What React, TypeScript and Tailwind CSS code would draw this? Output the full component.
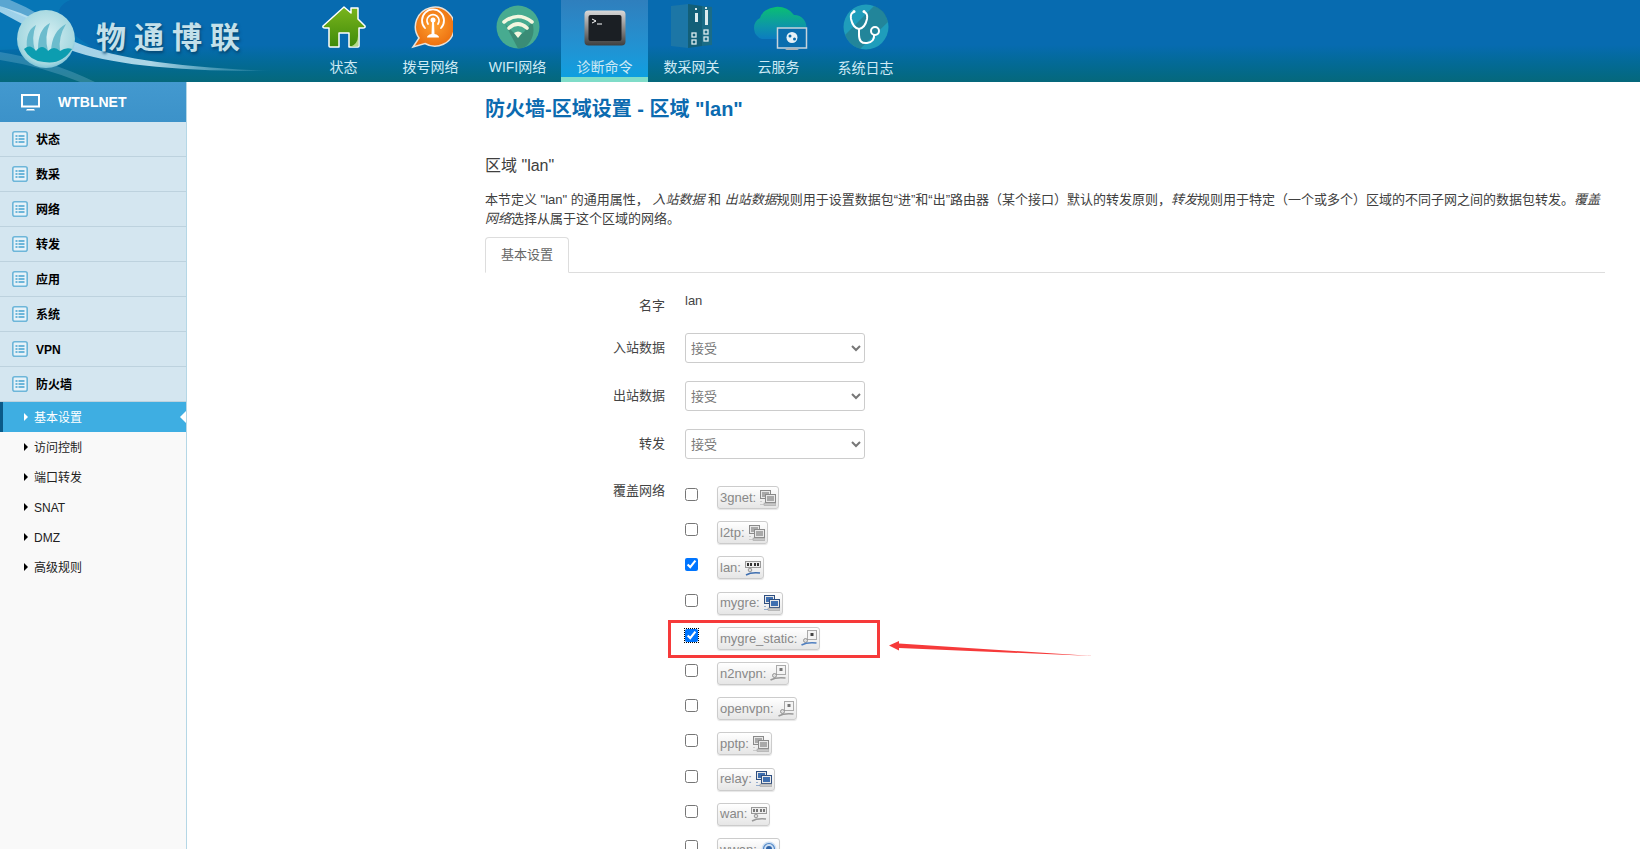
import React from 'react';

const FONT = '"Liberation Sans", "Noto Sans CJK SC", sans-serif';

const HomeIcon = () => (
  <svg width="44" height="42" viewBox="0 0 44 42">
    <defs>
      <linearGradient id="homeFill" x1="0" y1="0" x2="0" y2="1">
        <stop offset="0" stopColor="#7ab51d" />
        <stop offset="1" stopColor="#3f8a0a" />
      </linearGradient>
    </defs>
    <path d="M22 1 L29 7 V2 H36 V13 L43 20 Q43.500 22 41 22 H37 V40 Q37 41 36 41 H27 V27 H17 V41 H8 Q7 41 7 40 V22 H3 Q0.500 22 1 20 Z" fill="url(#homeFill)" stroke="#fff" strokeWidth="1.500" strokeLinejoin="round" />
    <path d="M28 41 Q36 38 36 30 V40 Z" fill="#b6d98a" />
  </svg>
);

const DialIcon = () => (
  <svg width="44" height="44" viewBox="0 0 44 44">
    <defs>
      <radialGradient id="dialFill" cx="0.5" cy="0.45" r="0.6">
        <stop offset="0" stopColor="#ffa02e" />
        <stop offset="1" stopColor="#ea6a0c" />
      </radialGradient>
    </defs>
    <path d="M4 42 L10 33 A19.500 19.500 0 1 1 16 38.500 Z" fill="url(#dialFill)" stroke="#e8e2da" strokeWidth="1.500" />
    <g fill="none" stroke="#fff" strokeWidth="1.800" strokeLinecap="round">
      <path d="M19 19 A6 6 0 1 1 29 19" />
      <path d="M16 23 A11 11 0 1 1 32 23" />
    </g>
    <circle cx="24" cy="15" r="2.500" fill="#fff" />
    <path d="M23 17 H25 L25.500 29 Q30 30 30 32.500 H18 Q18 30 22.500 29 Z" fill="#fff" />
  </svg>
);

const WifiIcon = () => (
  <svg width="44" height="44" viewBox="0 0 44 44">
    <circle cx="22" cy="22" r="21.500" fill="#47ab90" />
    <path d="M9 19 L22 32 L28 27 L36 17 A21.500 21.500 0 0 1 29 42 Q24 44 22 43.500 Z" fill="#37846f" opacity="0.8" />
    <g fill="none" stroke="#f4f6df" strokeWidth="3.600" strokeLinecap="round">
      <path d="M8 17 Q22 6 36 17" />
      <path d="M13 23 Q22 15 31 23" />
    </g>
    <path d="M18 28 Q22 25 26 28 L22 33 Z" fill="#f4f6df" />
  </svg>
);

const TerminalIcon = () => (
  <svg width="42" height="36" viewBox="0 0 42 36">
    <defs>
      <linearGradient id="termFrame" x1="0" y1="0" x2="0" y2="1">
        <stop offset="0" stopColor="#d9d9d9" />
        <stop offset="0.5" stopColor="#8b8b8b" />
        <stop offset="1" stopColor="#3e3e3e" />
      </linearGradient>
    </defs>
    <rect x="0.500" y="0.500" width="41" height="35" rx="4" fill="url(#termFrame)" />
    <rect x="4.500" y="5" width="33" height="26" rx="2" fill="#1b1f24" />
    <path d="M8 9 L12 11 L8 13 M13 14 H18" fill="none" stroke="#fff" strokeWidth="1" />
  </svg>
);

const GatewayIcon = () => (
  <svg width="42" height="44" viewBox="0 0 42 44">
    <path d="M0 2 L17 0 V44 L0 42 Z" fill="#1c76a6" />
    <path d="M17 0 L31 2 V42 L17 44 Z" fill="#125f78" />
    <path d="M31 2 L41 3 V41 L31 42 Z" fill="#1a6c86" />
    <g fill="#dcecef">
      <rect x="24" y="4" width="2" height="2" />
      <rect x="34" y="3" width="2" height="2" />
      <rect x="24" y="9" width="3" height="9" />
      <rect x="34" y="6" width="3" height="15" />
    </g>
    <g fill="none" stroke="#dcecef" strokeWidth="1.300">
      <rect x="21" y="29" width="4" height="4" />
      <rect x="21" y="36" width="4" height="4" />
      <rect x="33" y="26" width="4" height="4" />
      <rect x="33" y="33" width="4" height="4" />
    </g>
  </svg>
);

const CloudIcon = () => (
  <svg width="58" height="46" viewBox="0 0 58 46">
    <defs>
      <linearGradient id="cloudFill" x1="0" y1="0" x2="0" y2="1">
        <stop offset="0" stopColor="#0abf72" />
        <stop offset="0.6" stopColor="#0d96a8" />
        <stop offset="1" stopColor="#0c7cc0" />
      </linearGradient>
    </defs>
    <path d="M12 35 A11.500 11.500 0 0 1 10 14 A18 14 0 0 1 44 11 A12 12 0 0 1 56 26 V28 H28 V35 Z" fill="url(#cloudFill)" />
    <rect x="27.500" y="24" width="29" height="20" fill="#0a6dae" stroke="#c7d3db" strokeWidth="1.500" />
    <path d="M38 44 H46 L49 46 H35 Z" fill="#a9b2b8" />
    <circle cx="42" cy="33.500" r="5.500" fill="#e6f1f7" />
    <circle cx="40" cy="32" r="1.500" fill="#0a6dae" />
    <circle cx="44.500" cy="35" r="1.500" fill="#0a6dae" />
  </svg>
);

const LogIcon = () => (
  <svg width="46" height="46" viewBox="0 0 46 46">
    <circle cx="23" cy="23" r="22.500" fill="#1f9dbb" />
    <path d="M2 31 L31 2 Q42 5 45 18 L17 45 Q6 41 2 31 Z" fill="#237b8c" opacity="0.7" />
    <g fill="none" stroke="#fff" strokeWidth="2">
      <path d="M11 8 Q7 9 8 15 Q10 24 16 25 Q22 24 24 15 Q25 9 21 8" />
      <path d="M16 25 V31 Q16 40 24 39 Q32 38 31 30" />
      <circle cx="32" cy="27" r="4" />
    </g>
    <circle cx="11" cy="7.500" r="1.500" fill="#fff" />
    <circle cx="21" cy="7.500" r="1.500" fill="#fff" />
  </svg>
);

const MenuListIcon = () => (
  <svg width="16" height="16" viewBox="0 0 16 16" className="shrink-0">
    <rect x="0.800" y="0.800" width="14.400" height="14.400" rx="2" fill="#e7f2f8" stroke="#6db6d9" strokeWidth="1.600" />
    <g fill="#6db6d9">
      <rect x="3.500" y="4" width="2" height="2" />
      <rect x="6.500" y="4" width="6" height="2" />
      <rect x="3.500" y="7" width="2" height="2" />
      <rect x="6.500" y="7" width="6" height="2" />
      <rect x="3.500" y="10" width="2" height="2" />
      <rect x="6.500" y="10" width="6" height="2" />
    </g>
  </svg>
);

// small iface icons in the network badges
const BridgeIcon = ({ active }: { active?: boolean }) => {
  const screen = active ? '#3f6fb0' : '#a9a9a9';
  const frame = active ? '#2f4f80' : '#8a8a8a';
  return (
    <svg width="16" height="16" viewBox="0 0 16 16" className="shrink-0">
      <rect x="0.500" y="0.500" width="10" height="8" fill="#e8e8e8" stroke={frame} />
      <rect x="2" y="2" width="7" height="5" fill={screen} />
      <rect x="5.500" y="4.500" width="10" height="8" fill="#e8e8e8" stroke={frame} />
      <rect x="7" y="6" width="7" height="5" fill={screen} />
      <rect x="4" y="13" width="12" height="2.500" fill="#c8c8c8" stroke="#999" strokeWidth="0.500" />
      <path d="M1 11 V12 M1 14 V15 M3 14 V15" stroke={active ? '#3f6fb0' : '#aaa'} />
    </svg>
  );
};

const SwitchIcon = ({ active }: { active?: boolean }) => (
  <svg width="16" height="16" viewBox="0 0 16 16" className="shrink-0">
    <rect x="0.500" y="1.500" width="15" height="6" fill="#eee" stroke="#999" />
    <g fill={active ? '#333' : '#777'}>
      <rect x="2" y="3" width="2" height="3" />
      <rect x="5" y="3" width="2" height="3" />
      <rect x="9" y="3" width="2" height="3" />
      <rect x="12" y="3" width="2" height="3" />
    </g>
    <circle cx="5" cy="10" r="1.800" fill="#ddd" stroke="#777" strokeWidth="0.700" />
    <path d="M1 15 Q6 12 15 13" fill="none" stroke={active ? '#3f6fb0' : '#999'} strokeWidth="1.500" />
  </svg>
);

const TunnelIcon = ({ active }: { active?: boolean }) => (
  <svg width="16" height="16" viewBox="0 0 16 16" className="shrink-0">
    <rect x="6.500" y="0.500" width="9" height="9" fill="#f4f4f4" stroke="#aaa" />
    <rect x="9.500" y="3" width="3" height="3" fill={active ? '#444' : '#777'} />
    <circle cx="4.500" cy="10.500" r="2" fill="#ddd" stroke="#777" strokeWidth="0.700" />
    <path d="M0.500 15 Q6 12 15.500 13" fill="none" stroke={active ? '#4f7fc0' : '#999'} strokeWidth="1.500" />
  </svg>
);

const WirelessIcon = () => (
  <svg width="16" height="16" viewBox="0 0 16 16" className="shrink-0">
    <circle cx="8" cy="8" r="7.500" fill="#cfe0f3" />
    <circle cx="8" cy="8" r="5.500" fill="none" stroke="#4f86c6" strokeWidth="1.200" />
    <circle cx="8" cy="8" r="3" fill="#2f64a8" />
  </svg>
);

const navItems = [
  { label: '状态', icon: <HomeIcon />, top: 'pt-[6px] pb-[5px]' },
  { label: '拨号网络', icon: <DialIcon />, top: 'pt-[5px] pb-[5px]' },
  { label: 'WIFI网络', icon: <WifiIcon />, top: 'pt-[5px] pb-[5px]' },
  { label: '诊断命令', icon: <TerminalIcon />, top: 'pt-[10px]', active: true },
  { label: '数采网关', icon: <GatewayIcon />, top: 'pt-[4px] pb-[5px]' },
  { label: '云服务', icon: <CloudIcon />, top: 'pt-[4px] pb-[5px]' },
  { label: '系统日志', icon: <LogIcon />, top: 'pt-[4px] pb-[4px]' },
];

const menuItems = ['状态', '数采', '网络', '转发', '应用', '系统', 'VPN', '防火墙'];
const subItems = ['基本设置', '访问控制', '端口转发', 'SNAT', 'DMZ', '高级规则'];

const networks = [
  { name: '3gnet:', icon: <BridgeIcon /> },
  { name: 'l2tp:', icon: <BridgeIcon /> },
  { name: 'lan:', icon: <SwitchIcon active />, checked: true },
  { name: 'mygre:', icon: <BridgeIcon active /> },
  { name: 'mygre_static:', icon: <TunnelIcon active />, checked: true, marked: true },
  { name: 'n2nvpn:', icon: <TunnelIcon /> },
  { name: 'openvpn:', icon: <TunnelIcon /> },
  { name: 'pptp:', icon: <BridgeIcon /> },
  { name: 'relay:', icon: <BridgeIcon active /> },
  { name: 'wan:', icon: <SwitchIcon /> },
  { name: 'wwan:', icon: <WirelessIcon /> },
];

const Header = () => (
  <header className="h-[82px] flex shrink-0 bg-gradient-to-b from-[#076bb0] from-55% to-[#05687b]">
    <div className="relative w-[300px] h-full overflow-hidden shrink-0">
      {/* light streaks behind the logo */}
      <svg className="absolute inset-0" width="300" height="82" viewBox="0 0 300 82">
        <defs>
          <linearGradient id="streak" x1="0" y1="0" x2="1" y2="0">
            <stop offset="0" stopColor="#cdeefa" stopOpacity="0.75" />
            <stop offset="0.55" stopColor="#d5f1fb" stopOpacity="0.8" />
            <stop offset="1" stopColor="#9fd9ee" stopOpacity="0" />
          </linearGradient>
        </defs>
        <path d="M0 0 H70 Q40 14 90 46 L0 50 Z" fill="#0a8cc4" opacity="0.35" />
        <path d="M0 6 Q40 18 75 42 Q130 66 275 71 Q130 72 70 50 Q30 28 0 12 Z" fill="url(#streak)" />
        <path d="M0 0 H10 Q40 12 70 36 Q30 20 0 6 Z" fill="#d8f1fb" opacity="0.4" />
        <path d="M0 52 Q50 60 95 82 H80 Q40 66 0 60 Z" fill="#9fd4e6" opacity="0.25" />
      </svg>
      <svg className="absolute left-[16px] top-[9px]" width="60" height="60" viewBox="0 0 60 60">
        <defs>
          <radialGradient id="globeFill" cx="0.5" cy="0.45" r="0.6">
            <stop offset="0" stopColor="#d8f0f3" />
            <stop offset="0.8" stopColor="#a6d8e0" />
            <stop offset="1" stopColor="#63b7d2" />
          </radialGradient>
        </defs>
        <circle cx="30" cy="30" r="29" fill="url(#globeFill)" />
        <g fill="#6cbccd">
          <path d="M11 40 Q9 22 20 16 Q15 28 19 42 Z" />
          <path d="M22 40 Q22 20 34 14 Q28 28 32 42 Z" />
          <path d="M35 42 Q36 22 50 15 Q42 28 44 42 Z" />
        </g>
        <path d="M8 40 Q14 34 20 42 Q26 34 32 42 Q38 36 44 42 Q50 38 56 40 Q46 56 28 53 Q14 52 8 40 Z" fill="#0c9db0" />
      </svg>
      <div className="absolute left-[96px] top-[17px] text-[30px] leading-[42px] font-bold tracking-[8px] whitespace-nowrap text-[#c3e0ea] [text-shadow:1px_2px_3px_#06456f]">
        物通博联
      </div>
    </div>
    <nav className="flex">
      {navItems.map(item => (
        <div
          key={item.label}
          className={`w-[87px] h-full flex flex-col items-center justify-between ${item.top} ${item.active ? 'bg-gradient-to-b from-[#2f7fbd] to-[#0d9fe0] border-b-[5px] border-[#7fdcc8]' : ''}`}
        >
          {item.icon}
          <span className="text-[14px] leading-[20px] text-[#cfeaf5] whitespace-nowrap">{item.label}</span>
        </div>
      ))}
    </nav>
  </header>
);

const Sidebar = () => (
  <aside className="w-[187px] shrink-0 border-r border-[#b5d7e6] bg-[#f9f9f9] flex flex-col">
    <div className="h-[40px] bg-gradient-to-b from-[#4399cf] to-[#3c92c9] flex items-center pl-[21px] text-white">
      <svg width="19" height="17" viewBox="0 0 19 17" className="shrink-0">
        <path d="M1 1 H18 V12.500 H1 Z" fill="none" stroke="#fff" strokeWidth="2" />
        <path d="M6 15 H13 L14 16.500 H5 Z" fill="#fff" />
      </svg>
      <span className="ml-[18px] text-[14px] font-bold">WTBLNET</span>
    </div>
    {menuItems.map(item => (
      <div key={item} className="h-[35px] bg-[#d4e6f0] border-b border-[#bdd2de] flex items-center pl-[12px]">
        <MenuListIcon />
        <span className="ml-[8px] pt-[2px] text-[12px] font-bold text-black">{item}</span>
      </div>
    ))}
    {subItems.map((item, i) => (
      <div
        key={item}
        className={`relative h-[30px] flex items-center pt-[2px] text-[12px] ${i === 0 ? 'bg-[#3eaee2] text-white border-l-[3px] border-[#0a5a88] pl-[31px]' : 'text-[#222] pl-[34px]'}`}
      >
        <span className={`absolute top-[11px] w-0 h-0 border-y-[4px] border-y-transparent border-l-[4px] ${i === 0 ? 'border-l-white left-[21px]' : 'border-l-black left-[24px]'}`} />
        {item}
        {i === 0 && <span className="absolute right-0 top-[9px] w-0 h-0 border-y-[6px] border-y-transparent border-r-[6px] border-r-white" />}
      </div>
    ))}
  </aside>
);

const Row = ({ label, children, className, labelClass }: { label: string; children: React.ReactNode; className?: string; labelClass?: string }) => (
  <div className={`flex ${className ?? ''}`}>
    <label className={`w-[180px] shrink-0 text-right text-[13px] text-[#444] ${labelClass ?? 'leading-[30px]'}`}>{label}</label>
    <div className="ml-[20px]">{children}</div>
  </div>
);

const AcceptSelect = () => (
  <select defaultValue="accept" className="block w-[180px] h-[30px] pl-[1px] bg-white border border-[#ccc] rounded-[3px] text-[13px] text-[#777]">
    <option value="accept">接受</option>
  </select>
);

export default function App() {
  return (
    <div className="h-screen flex flex-col overflow-hidden bg-white" style={{ fontFamily: FONT }}>
      <Header />
      <div className="flex flex-1 min-h-0">
        <Sidebar />
        <main className="flex-1 min-w-0 pl-[298px] pr-[35px]">
          <h2 className="mt-[15px] text-[20px] leading-[24px] font-bold text-[#0c6bb0]">防火墙-区域设置 - 区域 "lan"</h2>
          <h3 className="mt-[33px] text-[16px] leading-[24px] text-[#404040]">区域 "lan"</h3>
          <p className="mt-[12px] text-[13px] leading-[19px] text-[#404040]">
            本节定义 "lan" 的通用属性， <em>入站数据</em> 和 <em>出站数据</em>规则用于设置数据包“进”和“出”路由器（某个接口）默认的转发原则，<em>转发</em>规则用于特定（一个或多个）区域的不同子网之间的数据包转发。<em>覆盖网络</em>选择从属于这个区域的网络。
          </p>
          <div className="mt-[9px] h-[36px] border-b border-[#ddd] flex">
            <div className="w-[84px] h-[36px] bg-white border border-[#ddd] border-b-white rounded-t-[4px] flex items-center justify-center text-[13px] text-[#666]">
              基本设置
            </div>
          </div>
          <Row label="名字" className="mt-[18px] h-[42px]">
            <span className="block mt-[3px] text-[13px] leading-[14px] text-[#444]">lan</span>
          </Row>
          <Row label="入站数据" className="h-[48px]"><AcceptSelect /></Row>
          <Row label="出站数据" className="h-[48px]"><AcceptSelect /></Row>
          <Row label="转发" className="h-[57px]"><AcceptSelect /></Row>
          <Row label="覆盖网络" labelClass="leading-[10px]">
            <div className="flex flex-col">
              {networks.map(net => (
                <div key={net.name} className="relative h-[35.2px] flex items-start">
                  <input
                    type="checkbox"
                    defaultChecked={net.checked}
                    className={`block w-[13px] h-[13px] mt-[2px] shrink-0 ${net.marked ? 'outline-1 outline-dotted outline-black' : ''}`}
                  />
                  <span className="ml-[19px] h-[23px] flex items-center gap-[4px] px-[2px] border border-[#ccc] rounded-[3px] bg-gradient-to-b from-white to-[#e6e6e6] shadow-[0_1px_1px_rgba(0,0,0,0.1)] text-[13px] text-[#888] whitespace-nowrap">
                    {net.name}
                    {net.icon}
                  </span>
                  {net.marked && (
                    <>
                      <span className="absolute left-[-17px] top-[-7px] w-[212px] h-[38px] border-[3px] border-[#f63a3a]" />
                      <svg className="absolute left-[204px] top-[14px]" width="206" height="20" viewBox="0 0 206 20">
                        <path d="M0 4.500 L10 0 L10 2.500 L204 15 L10 7 L10 9.500 Z" fill="#f63a3a" />
                      </svg>
                    </>
                  )}
                </div>
              ))}
            </div>
          </Row>
        </main>
      </div>
    </div>
  );
}
